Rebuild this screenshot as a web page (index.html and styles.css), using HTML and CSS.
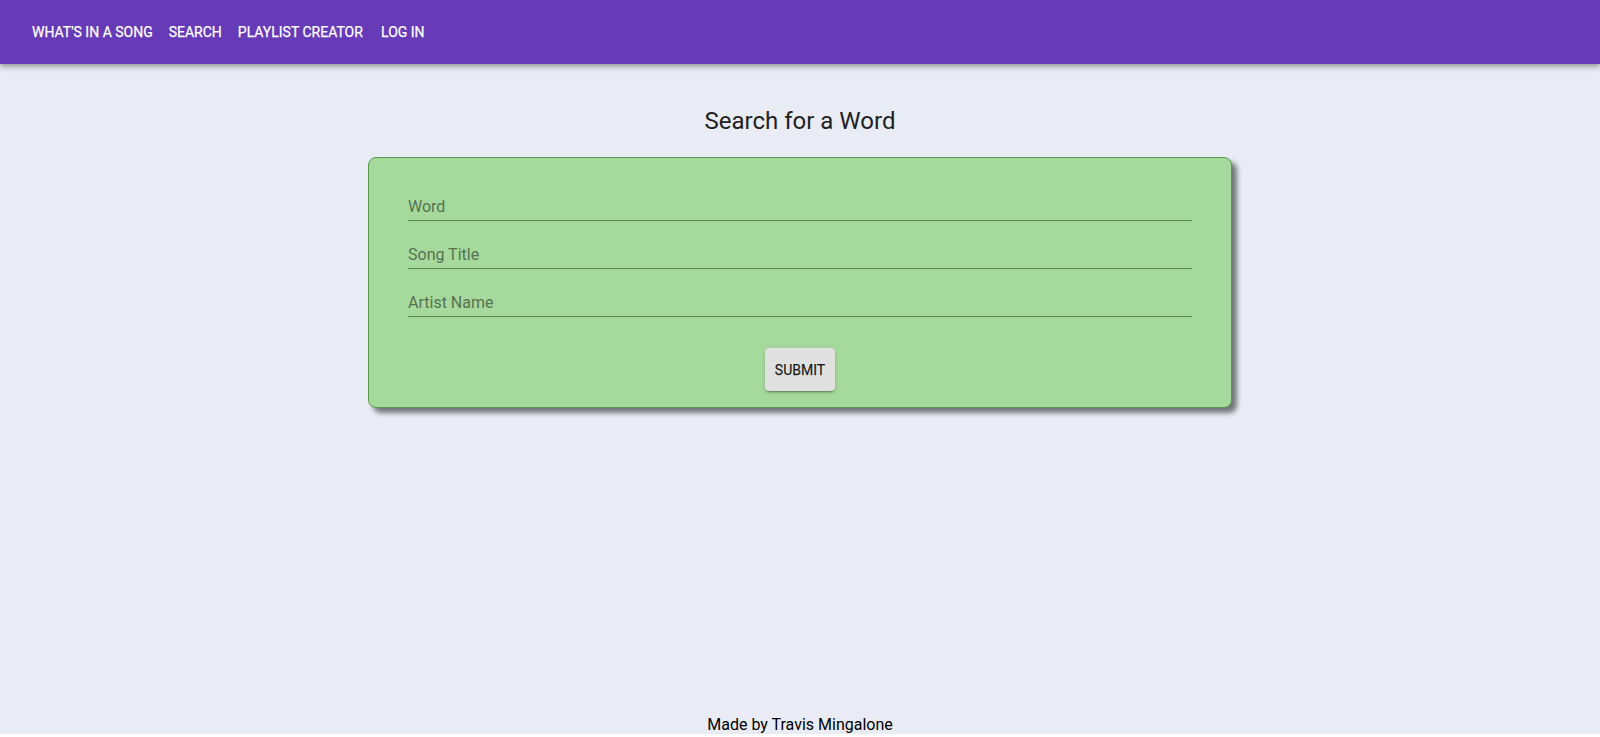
FILE: index.html
```html
<!DOCTYPE html>
<html lang="en">
<head>
<meta charset="utf-8">
<title>What's in a Song</title>
<link rel="stylesheet" href="styles.css">
</head>
<body>
<div class="app">
  <header class="appbar">
    <nav class="toolbar">
      <a class="nav-btn" href="#">What's in a Song</a>
      <a class="nav-btn" href="#">Search</a>
      <a class="nav-btn" href="#">Playlist Creator</a>
      <a class="nav-btn" href="#">Log In</a>
    </nav>
  </header>
  <main class="main">
    <h1 class="title">Search for a Word</h1>
    <form class="card">
      <label class="field"><span class="field-label">Word</span></label>
      <label class="field"><span class="field-label">Song Title</span></label>
      <label class="field"><span class="field-label">Artist Name</span></label>
      <div class="actions">
        <button type="button" class="submit">Submit</button>
      </div>
    </form>
  </main>
  <footer class="footer">Made by Travis Mingalone</footer>
</div>
</body>
</html>
```

FILE: styles.css
```css
* { box-sizing: border-box; }

html, body {
  margin: 0;
  padding: 0;
  background: #ffffff;
}

body {
  font-family: Roboto, "Liberation Sans", Arial, sans-serif;
}

.app {
  min-height: 734px;
  background: #e9ecf4;
  display: flex;
  flex-direction: column;
}

.appbar {
  background: #673ab7;
  height: 64px;
  box-shadow: 0 2px 4px -1px rgba(0,0,0,0.2), 0 4px 5px 0 rgba(0,0,0,0.14), 0 1px 10px 0 rgba(0,0,0,0.12);
  position: relative;
  z-index: 1;
}

.toolbar {
  display: flex;
  align-items: center;
  height: 64px;
  padding: 0 24px;
}

.nav-btn {
  color: #ffffff;
  text-decoration: none;
  text-transform: uppercase;
  font-size: 14px;
  font-weight: 400;
  letter-spacing: 0;
  line-height: 24px;
  padding: 6px 8px;
  min-width: 64px;
  text-align: center;
  border-radius: 4px;
  -webkit-text-stroke: 0.25px #ffffff;
}

.main {
  display: flex;
  flex-direction: column;
  align-items: center;
}

.title {
  margin: 43px 0 22px;
  font-size: 24px;
  font-weight: 400;
  line-height: 28px;
  color: #222222;
}

.card {
  width: 864px;
  background: #a6da9c;
  border: 1px solid #5a9a50;
  border-radius: 8px;
  box-shadow: 5px 5px 5px rgba(0,0,0,0.5);
  padding: 15px 39px 16px;
  display: flex;
  flex-direction: column;
}

.field {
  height: 48px;
  display: flex;
  align-items: flex-end;
  border-bottom: 1px solid #5f8258;
}

.field-label {
  font-size: 16px;
  line-height: 19px;
  padding-bottom: 4px;
  color: #587152;
}

.actions {
  display: flex;
  justify-content: center;
  margin-top: 31px;
}

.submit {
  font-family: Roboto, "Liberation Sans", Arial, sans-serif;
  background: #e0e0e0;
  color: rgba(0,0,0,0.87);
  border: none;
  border-radius: 4px;
  height: 43px;
  width: 70px;
  padding: 0;
  font-size: 14px;
  font-weight: 400;
  letter-spacing: 0;
  text-transform: uppercase;
  -webkit-text-stroke: 0.25px rgba(0,0,0,0.87);
  box-shadow: 0 3px 1px -2px rgba(0,0,0,0.2), 0 2px 2px 0 rgba(0,0,0,0.14), 0 1px 5px 0 rgba(0,0,0,0.12);
  cursor: pointer;
}

.footer {
  margin-top: auto;
  text-align: center;
  font-size: 16px;
  line-height: 19px;
  color: #000000;
}
```
